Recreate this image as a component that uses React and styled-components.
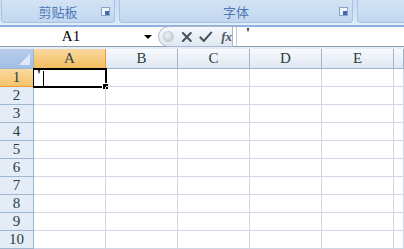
import React from 'react';
import styled, { createGlobalStyle } from 'styled-components';

const Global = createGlobalStyle`
  html, body { margin: 0; padding: 0; background: #ffffff; overflow: hidden; }
  body { width: 404px; height: 249px; font-family: "Liberation Sans", Arial, sans-serif; }
`;

const cellFont = `"Liberation Serif", "Times New Roman", serif`;

const Window = styled.div`
  width: 404px;
  height: 249px;
  display: flex;
  flex-direction: column;
  overflow: hidden;
`;

const Ribbon = styled.div`
  height: 26px;
  display: flex;
  gap: 4px;
  padding: 0 0 0 1px;
  background: linear-gradient(#c9dcf2 0%, #d6e6f7 80%, #e2f0fb 100%);
  border-bottom: 2px solid #8fb1dc;
`;

const Group = styled.div`
  width: ${p => p.w}px;
  height: 23px;
  flex-shrink: 0;
  position: relative;
  display: flex;
  align-items: center;
  justify-content: center;
  box-sizing: border-box;
  background: linear-gradient(#d3e3f5, #c2d7ef);
  border: 1px solid #a9c1e2;
  border-top: none;
  border-radius: 0 0 4px 4px;
  color: #4d79b6;
  font-size: 13px;
  font-family: "Noto Sans CJK SC", sans-serif;
`;

const Launcher = styled.span`
  position: absolute;
  right: 4px;
  top: 7px;
  width: 7px;
  height: 7px;
  border: 1px solid #8aa3c6;
  background: #eef4fb;
  &::after {
    content: "";
    position: absolute;
    right: 0;
    bottom: 0;
    width: 4px;
    height: 4px;
    background: #3d6cae;
  }
`;

const FormulaBar = styled.div`
  height: 19px;
  display: flex;
  align-items: center;
  background: #ffffff;
  border-bottom: 1px solid #8f9db1;
`;

const NameBox = styled.div`
  width: 158px;
  height: 19px;
  flex-shrink: 0;
  position: relative;
  display: flex;
  align-items: center;
  justify-content: center;
  font-family: ${cellFont};
  font-size: 15px;
  color: #000;
  padding-right: 16px;
  box-sizing: border-box;
`;

const Arrow = styled.span`
  position: absolute;
  right: 6px;
  top: 8px;
  border-left: 4px solid transparent;
  border-right: 4px solid transparent;
  border-top: 4px solid #000;
`;

const Pill = styled.div`
  width: 75px;
  height: 21px;
  flex-shrink: 0;
  box-sizing: border-box;
  display: flex;
  align-items: center;
  gap: 7px;
  padding-left: 4px;
  border: 1px solid #a9b8cc;
  border-radius: 11px 0 0 11px;
  background: linear-gradient(#f5f8fc, #dfe7f1);
`;

const Dot = styled.span`
  width: 9px;
  height: 9px;
  border-radius: 50%;
  background: radial-gradient(circle at 35% 35%, #f4f6f8, #b4bcc6);
  border: 1px solid #c9d0d9;
`;

const Fx = styled.span`
  font-family: "Liberation Serif", serif;
  font-style: italic;
  font-weight: bold;
  font-size: 13px;
  color: #4b5563;
  margin-left: 1px;
`;

const FormulaInput = styled.div`
  flex: 1;
  height: 19px;
  border-left: 1px solid #c2cad6;
  margin-left: 3px;
  padding-left: 9px;
  font-family: ${cellFont};
  font-size: 14px;
  line-height: 14px;
  font-weight: bold;
`;

const Gap = styled.div`
  height: 2px;
  background: #e4ecf7;
`;

const Grid = styled.div`
  display: grid;
  grid-template-columns: 34px repeat(5, 72px) 1fr;
  grid-template-rows: 20px;
  grid-auto-rows: 18px;
`;

const Corner = styled.div`
  background: linear-gradient(#b7cdeb, #a3bee6);
  border-right: 1px solid #9eb6ce;
  border-bottom: 1px solid #9eb6ce;
  position: relative;
  &::after {
    content: "";
    position: absolute;
    right: 3px;
    bottom: 3px;
    border-left: 11px solid transparent;
    border-bottom: 11px solid #dfe9f7;
  }
`;

const ColHead = styled.div`
  display: flex;
  align-items: center;
  justify-content: center;
  font-family: ${cellFont};
  font-size: 15px;
  color: #27413e;
  background: ${p => (p.sel ? 'linear-gradient(#f9d99f, #f2bd5e)' : 'linear-gradient(#f8fafd, #dfe7f2)')};
  border-right: 1px solid ${p => (p.sel ? '#f29536' : '#9eb6ce')};
  border-bottom: 1px solid ${p => (p.sel ? '#f29536' : '#9eb6ce')};
`;

const RowHead = styled.div`
  display: flex;
  align-items: center;
  justify-content: center;
  font-family: ${cellFont};
  font-size: 15px;
  color: #27413e;
  background: ${p => (p.sel ? 'linear-gradient(#f9d99f, #f3c46c)' : '#e4ecf7')};
  border-right: 1px solid ${p => (p.sel ? '#f29536' : '#9eb6ce')};
  border-bottom: 1px solid ${p => (p.sel ? '#f29536' : '#9eb6ce')};
`;

const Cell = styled.div`
  border-right: 1px solid #d0d7e5;
  border-bottom: 1px solid #d0d7e5;
  position: relative;
`;

const Selection = styled.div`
  position: absolute;
  left: -1px;
  top: -1px;
  right: -2px;
  bottom: -2px;
  border: 2px solid #000;
  border-left-width: 1px;
  box-sizing: border-box;
  font-family: ${cellFont};
  font-weight: bold;
  font-size: 14px;
  line-height: 12px;
  padding-left: 3px;
  &::after {
    content: "";
    position: absolute;
    right: -4px;
    bottom: -4px;
    width: 5px;
    height: 5px;
    background: #000;
    border: 1px solid #fff;
  }
`;

const Caret = styled.span`
  position: absolute;
  left: 9px;
  top: 1px;
  width: 1px;
  height: 15px;
  background: #000;
`;

const cols = ['A', 'B', 'C', 'D', 'E', ''];
const rows = [1, 2, 3, 4, 5, 6, 7, 8, 9, 10];

export default function App() {
  return (
    <Window>
      <Global />
      <Ribbon>
        <Group w={114}>剪贴板<Launcher /></Group>
        <Group w={234}>字体<Launcher /></Group>
        <Group w={60} />
      </Ribbon>
      <FormulaBar>
        <NameBox>A1<Arrow /></NameBox>
        <Pill>
          <Dot />
          <svg width="12" height="12" viewBox="0 0 12 12">
            <path d="M2 2 L10 10 M10 2 L2 10" stroke="#4a5260" strokeWidth="2.2" strokeLinecap="round" />
          </svg>
          <svg width="14" height="12" viewBox="0 0 14 12">
            <path d="M1.5 6.5 L5 10 L12.5 1.5" stroke="#4a5260" strokeWidth="2.2" fill="none" strokeLinecap="round" strokeLinejoin="round" />
          </svg>
          <Fx>fx</Fx>
        </Pill>
        <FormulaInput>'</FormulaInput>
      </FormulaBar>
      <Gap />
      <Grid>
        <Corner />
        {cols.map((c, i) => (
          <ColHead key={i} sel={c === 'A'}>{c}</ColHead>
        ))}
        {rows.map(r => (
          <React.Fragment key={r}>
            <RowHead sel={r === 1}>{r}</RowHead>
            {cols.map((c, i) => (
              <Cell key={i}>
                {r === 1 && c === 'A' && (
                  <Selection>'<Caret /></Selection>
                )}
              </Cell>
            ))}
          </React.Fragment>
        ))}
      </Grid>
    </Window>
  );
}
